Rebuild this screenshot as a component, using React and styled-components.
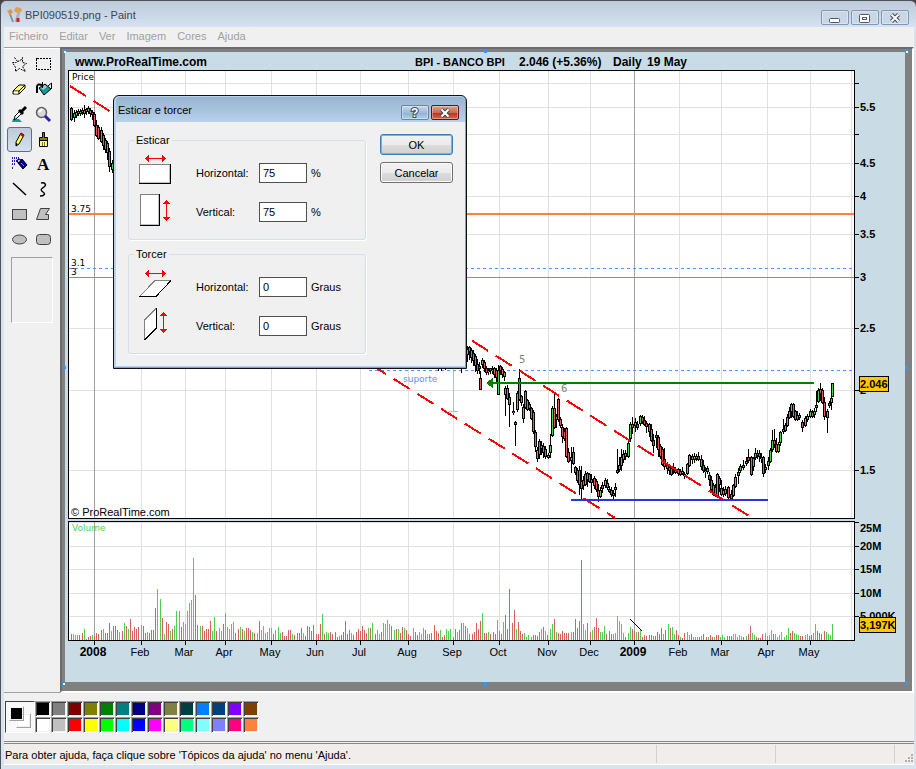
import { useState } from 'react';
import styled, { createGlobalStyle } from 'styled-components';

const MENUS = ['Ficheiro', 'Editar', 'Ver', 'Imagem', 'Cores', 'Ajuda'];

const COLORS = [
  ['#000000', '#808080', '#800000', '#808000', '#008000', '#008080', '#000080', '#800080', '#808040', '#004040', '#0080ff', '#004080', '#8000ff', '#804000'],
  ['#ffffff', '#c0c0c0', '#ff0000', '#ffff00', '#00ff00', '#00ffff', '#0000ff', '#ff00ff', '#ffff80', '#00ff80', '#80ffff', '#8080ff', '#ff0080', '#ff8040'],
];

const TOOLS = [
  {
    name: 'Selecção livre',
    icon: <path d="M6.500 5.500L3.500 1.500M6.500 5.500L9.500 4.500L11.500 1.500V6.500L15.500 7.500L11.500 10.500L14.500 15.500L8.500 12.500L4.500 15.500V11.500L1.500 6.500H5.500" fill="none" stroke="#000" strokeDasharray="2 1" />,
  },
  {
    name: 'Seleccionar',
    icon: <rect x="1.500" y="2.500" width="14" height="11" fill="none" stroke="#000" strokeDasharray="2 1" shapeRendering="crispEdges" />,
  },
  {
    name: 'Borracha',
    icon: (
      <>
        <path d="M2 10L8 4H14V7L8 13H2z" fill="#ffff80" stroke="#000" />
        <path d="M2 10H8L14 4M8 10V13" fill="none" stroke="#000" />
        <path d="M3 11.500H7" stroke="#fff" strokeWidth="2" />
      </>
    ),
  },
  {
    name: 'Preencher com cor',
    icon: (
      <>
        <path d="M4 7L10 3L16 8L9 14z" fill="#00a0a0" stroke="#000" />
        <path d="M6 7L10 4L12 6L8 9z" fill="#c0c0c0" />
        <path d="M2 12V6C2 3 4 3 7 4" fill="none" stroke="#000" strokeWidth="2" />
        <path d="M7.500 1V7M13 5L16.500 2V8" fill="none" stroke="#000" />
      </>
    ),
  },
  {
    name: 'Seleccionar cor',
    icon: (
      <>
        <path d="M1 16H11L8 13H2z" fill="#00a0a0" />
        <path d="M3 14L4 10L9 5L11 7L6 12z" fill="#fff" stroke="#000" />
        <path d="M8 4L12 8M10 6L15 1" stroke="#000" strokeWidth="3" />
      </>
    ),
  },
  {
    name: 'Lupa',
    icon: (
      <>
        <circle cx="6.500" cy="6.500" r="5" fill="#d8d8d8" stroke="#606060" strokeWidth="1.500" />
        <path d="M4 6L7 3" stroke="#fff" strokeWidth="2" />
        <path d="M10 10L15 15" stroke="#2020c0" strokeWidth="3" />
      </>
    ),
  },
  {
    name: 'Lápis',
    icon: (
      <>
        <path d="M5 15V11L10 2L13 4L8 13z" fill="#ffff60" stroke="#000" />
        <path d="M10 2L13 4L12 6L9 4z" fill="#e00000" />
        <path d="M5 15V12L7 13z" fill="#000" />
      </>
    ),
  },
  {
    name: 'Pincel',
    icon: (
      <>
        <path d="M7.500 1.500H9.500V6.500H12.500V9.500H4.500V6.500H7.500z" fill="#808000" stroke="#000" />
        <path d="M4.500 9.500H12.500V15.500H4.500z" fill="#ffff80" stroke="#000" />
        <path d="M7.500 11V15M9.500 11V15" stroke="#808000" />
      </>
    ),
  },
  {
    name: 'Spray',
    icon: (
      <>
        <path d="M1 2H8M1 5H6M1 8H4M1 12H3" stroke="#2020c0" strokeWidth="2" strokeDasharray="1 1" />
        <path d="M7 7L11 3L16 9L12 13z" fill="#0000a0" stroke="#000" />
        <path d="M6 4L9 3L10 5L7 7z" fill="#c0c0c0" stroke="#000" />
        <path d="M10 7L13 10" stroke="#8080ff" />
      </>
    ),
  },
  {
    name: 'Texto',
    icon: <text x="2" y="14" fontFamily="Liberation Serif, serif" fontWeight="bold" fontSize="17">A</text>,
  },
  {
    name: 'Linha',
    icon: <path d="M2 2L15 14" stroke="#000" strokeWidth="1.500" />,
  },
  {
    name: 'Curva',
    icon: <path d="M6 2C10 1 12 4 9 6C6 8 5 9 8 11C11 13 9 15 5 15" fill="none" stroke="#000" strokeWidth="1.500" />,
  },
  {
    name: 'Rectângulo',
    icon: <rect x="1.500" y="3.500" width="14" height="10" fill="#c0c0c0" stroke="#404040" />,
  },
  {
    name: 'Polígono',
    icon: <path d="M5.500 2.500H14.500L10.500 8.500H13.500V13.500H1.500z" fill="#c0c0c0" stroke="#404040" />,
  },
  {
    name: 'Elipse',
    icon: <ellipse cx="8.500" cy="8.500" rx="7" ry="4.500" fill="#c0c0c0" stroke="#404040" />,
  },
  {
    name: 'Rectângulo arredondado',
    icon: <rect x="1.500" y="3.500" width="14" height="10" rx="3" fill="#c0c0c0" stroke="#404040" />,
  },
];

// x, kind, high, top, bottom, low
const CANDLES = [
  [71, 'r', 107, 108, 120, 121], [74, 'g', 110, 113, 118, 122], [76, 'g', 110, 112, 116, 118], [78, 'r', 109, 111, 114, 116],
  [80, 'g', 109, 111, 114, 116], [82, 'r', 108, 110, 113, 115], [84, 'g', 105, 110, 114, 118], [86, 'r', 108, 109, 112, 115],
  [88, 'g', 106, 108, 112, 114], [90, 'r', 108, 110, 114, 117], [92, 'r', 110, 112, 115, 120], [94, 'r', 112, 114, 126, 127],
  [96, 'r', 120, 125, 136, 137], [98, 'r', 125, 127, 139, 140], [101, 'r', 127, 130, 142, 143], [103, 'r', 133, 135, 146, 150],
  [105, 'r', 138, 140, 150, 153], [107, 'r', 141, 143, 153, 160], [109, 'r', 148, 151, 167, 172], [112, 'g', 160, 163, 170, 173],
  [467, 'g', 346, 349, 355, 362], [469, 'r', 346, 347, 352, 360], [471, 'r', 348, 350, 358, 363], [473, 'r', 350, 353, 361, 366],
  [475, 'r', 354, 356, 366, 372], [477, 'r', 359, 364, 371, 374], [479, 'r', 362, 366, 369, 374], [480, 'r', 371, 378, 390, 390],
  [482, 'g', 358, 360, 365, 368], [484, 'r', 360, 362, 369, 372], [486, 'r', 366, 368, 373, 375], [488, 'g', 368, 370, 372, 375],
  [490, 'r', 368, 368, 371, 374], [492, 'g', 366, 369, 371, 374], [494, 'r', 367, 368, 375, 378], [496, 'r', 368, 370, 378, 384],
  [498, 'g', 365, 370, 395, 395], [500, 'r', 365, 366, 371, 375], [502, 'r', 367, 369, 375, 378], [504, 'g', 371, 372, 377, 381],
  [505, 'r', 386, 388, 395, 416], [507, 'r', 385, 388, 399, 400], [509, 'r', 393, 397, 405, 427], [513, 'r', 402, 411, 413, 415],
  [515, 'g', 421, 422, 425, 446], [517, 'g', 391, 393, 410, 412], [519, 'r', 369, 378, 400, 401], [521, 'r', 395, 396, 403, 406],
  [523, 'g', 404, 407, 419, 423], [525, 'r', 390, 391, 408, 409], [527, 'r', 399, 400, 410, 411], [529, 'r', 402, 404, 409, 411],
  [531, 'r', 407, 408, 419, 420], [533, 'r', 410, 412, 432, 434], [535, 'r', 430, 432, 447, 452], [537, 'g', 447, 450, 459, 462],
  [539, 'r', 439, 441, 455, 459], [541, 'r', 441, 445, 449, 455], [543, 'r', 443, 446, 453, 458], [545, 'r', 446, 449, 457, 459],
  [548, 'g', 453, 455, 458, 459], [550, 'g', 434, 445, 453, 458], [552, 'g', 406, 408, 436, 437], [554, 'r', 393, 408, 428, 429],
  [556, 'g', 414, 416, 420, 428], [558, 'r', 398, 399, 420, 422], [560, 'r', 417, 419, 426, 428], [562, 'r', 424, 427, 437, 443],
  [564, 'r', 428, 431, 439, 441], [566, 'r', 427, 428, 457, 458], [568, 'r', 448, 452, 462, 463], [571, 'g', 447, 457, 461, 473],
  [573, 'r', 447, 452, 464, 465], [575, 'r', 466, 467, 473, 475], [577, 'r', 468, 470, 481, 483], [579, 'r', 466, 470, 485, 495],
  [581, 'r', 466, 481, 489, 499], [583, 'r', 476, 480, 486, 490], [585, 'g', 471, 474, 485, 486], [587, 'r', 472, 473, 480, 487],
  [589, 'r', 473, 474, 482, 483], [591, 'r', 474, 479, 483, 493], [594, 'r', 476, 478, 486, 489], [596, 'r', 479, 481, 490, 492],
  [598, 'r', 484, 490, 497, 502], [600, 'g', 487, 490, 497, 498], [602, 'r', 482, 485, 489, 493], [605, 'g', 478, 480, 486, 488],
  [607, 'r', 479, 483, 488, 490], [609, 'r', 486, 489, 492, 493], [611, 'r', 487, 490, 495, 497], [613, 'g', 490, 493, 496, 499],
  [615, 'g', 483, 487, 490, 497], [617, 'g', 449, 470, 473, 474], [619, 'g', 457, 465, 470, 472], [621, 'g', 449, 457, 466, 471],
  [623, 'g', 450, 454, 460, 463], [625, 'r', 450, 453, 457, 460], [628, 'g', 441, 443, 457, 458], [630, 'g', 422, 424, 439, 442],
  [632, 'r', 417, 424, 428, 434], [635, 'g', 418, 422, 426, 432], [637, 'r', 421, 424, 428, 430], [640, 'g', 415, 416, 424, 426],
  [642, 'r', 415, 417, 422, 424], [644, 'r', 416, 420, 425, 426], [646, 'r', 421, 423, 427, 433], [649, 'r', 423, 424, 432, 437],
  [651, 'r', 424, 429, 441, 442], [653, 'r', 434, 440, 446, 453], [656, 'g', 431, 435, 438, 448], [658, 'r', 435, 437, 450, 457],
  [660, 'r', 444, 446, 457, 459], [662, 'r', 447, 449, 465, 466], [664, 'r', 448, 459, 467, 470], [667, 'r', 462, 465, 469, 474],
  [669, 'r', 464, 467, 471, 475], [671, 'r', 466, 468, 475, 476], [673, 'g', 463, 467, 470, 474], [675, 'r', 467, 470, 473, 474],
  [678, 'r', 468, 469, 474, 476], [680, 'r', 469, 471, 475, 476], [682, 'g', 467, 471, 474, 475], [684, 'g', 472, 474, 476, 479],
  [687, 'g', 463, 464, 474, 475], [689, 'g', 454, 455, 466, 467], [692, 'r', 454, 456, 460, 464], [694, 'g', 453, 456, 460, 463],
  [696, 'g', 454, 456, 459, 461], [698, 'r', 452, 456, 460, 461], [701, 'r', 455, 459, 467, 470], [703, 'r', 460, 465, 471, 473],
  [705, 'r', 467, 470, 472, 478], [707, 'r', 466, 468, 472, 474], [709, 'r', 472, 475, 480, 486], [711, 'r', 476, 480, 490, 491],
  [713, 'r', 483, 485, 495, 496], [715, 'r', 484, 487, 496, 497], [717, 'g', 473, 474, 497, 498], [719, 'r', 476, 478, 485, 492],
  [721, 'r', 480, 488, 495, 496], [723, 'g', 487, 490, 495, 497], [725, 'r', 486, 489, 494, 496], [728, 'r', 486, 487, 498, 499],
  [731, 'r', 490, 494, 499, 501], [733, 'g', 484, 485, 496, 497], [735, 'g', 474, 477, 487, 488], [738, 'g', 468, 472, 476, 484],
  [740, 'g', 464, 466, 471, 473], [743, 'r', 460, 465, 468, 470], [746, 'g', 457, 461, 464, 466], [748, 'r', 449, 457, 461, 463],
  [751, 'r', 456, 457, 475, 476], [753, 'g', 457, 458, 467, 471], [755, 'g', 448, 453, 458, 460], [757, 'r', 450, 453, 456, 459],
  [759, 'r', 450, 453, 457, 462], [761, 'r', 453, 457, 459, 463], [763, 'r', 456, 457, 474, 477], [765, 'r', 464, 467, 470, 473],
  [768, 'g', 457, 461, 466, 470], [770, 'g', 448, 450, 462, 463], [772, 'g', 430, 440, 450, 452], [774, 'r', 429, 440, 445, 448],
  [776, 'r', 438, 444, 452, 453], [778, 'g', 442, 444, 452, 453], [780, 'g', 431, 432, 443, 446], [783, 'g', 419, 429, 432, 434],
  [785, 'g', 423, 425, 431, 432], [787, 'g', 414, 417, 426, 427], [789, 'g', 407, 411, 418, 419], [791, 'g', 403, 404, 412, 418],
  [793, 'r', 403, 404, 417, 418], [795, 'r', 410, 411, 420, 421], [797, 'r', 411, 415, 420, 421], [799, 'g', 413, 415, 418, 420],
  [802, 'r', 420, 422, 428, 432], [805, 'g', 416, 418, 426, 427], [807, 'g', 414, 416, 420, 422], [810, 'g', 409, 411, 417, 418],
  [812, 'r', 410, 412, 417, 418], [814, 'g', 408, 411, 415, 418], [816, 'g', 391, 405, 408, 412], [818, 'g', 388, 390, 402, 403],
  [820, 'r', 383, 389, 394, 401], [822, 'r', 388, 390, 403, 404], [824, 'r', 397, 402, 417, 420], [827, 'g', 409, 411, 418, 433],
  [829, 'g', 401, 403, 406, 408], [831, 'g', 395, 398, 403, 410], [832, 'g', 383, 383, 397, 397],
];

const VOLUME = `r6 g6 g5 g5 r5 r7 g11 g1 r3 r4 g5 r4 r7 r6 r10 g11 r7 r7 r17 g9 r14 r14 r10 g8 r9 g17 r14 g11 r21 r9 r13 r11 r13 g15 r14
r7 g8 r7 r10 r10 r32 g51 g41 r22 g6 r18 r16 g9 r11 g14 g29 g29 r13 g18 g16 g29 g37 g40 g82 r45 r15 g14 r14 r9 r11 r11 r19 g9 g23 r9
g12 g9 r16 g27 g13 g11 g16 g18 r7 r11 g13 r11 g9 r12 r12 r10 g8 r7 g7 r19 g10 g14 g7 g8 g12 g12 r6 g10 g13 g7 r8 r4 r4 r10 r10 g6
r5 r7 r7 r12 g7 r4 r14 r13 r9 r15 r6 r6 r16 g26 r6 g8 g7 r8 r6 r8 r3 g4 r5 r8 r19 r6 r10 g7 r5 r8 r11 r9 r14 r10 r7 g12 r12 g17 r6
g10 g6 r8 g17 g16 g20 g16 r14 g10 r11 g11 r7 r13 g12 r10 r6 r4 g12 r8 r5 g8 g6 g12 r10 g6 r6 r7 r15 r9 r7 g10 r3 r5 g11 g9 g11 r3
r11 g8 r10 r17 g17 r14 g12 r6 r6 r8 r17 r11 r19 g27 r7 r7 g8 r6 r8 r6 g20 r9 r6 g18 r25 r11 r51 r17 r30 g11 r18 r9 r6 g7 g3 g5 g3
r5 r5 r4 r8 g11 r13 g9 r5 g11 g16 r21 g8 r7 r6 r9 r7 r7 r7 g8 r8 r21 r12 r19 r80 g16 g10 r17 r8 g10 r13 r22 r12 g8 g8 g14 r6 r9 r6
g6 g7 g24 g19 g16 g7 r3 g7 g13 r11 r9 g8 r8 g10 r3 r5 r4 r5 r5 g4 r4 r8 r6 r12 g6 r10 g16 r12 g13 g6 r10 r5 g3 r2 r7 g8 g5 r6 g3 g3
g3 r3 g4 r6 r3 g3 r5 r3 g3 r5 r5 g3 g5 g3 r4 r4 r4 g6 g6 g3 g5 g4 r3 g4 r6 r14 g7 g5 r3 r2 r2 r6 g7 g4 g5 g10 r6 g6 g3 g5 g8 g3 g5
g12 r7 r9 g7 g6 g5 r4 r4 g5 g6 r4 r5 g7 g16 r9 r7 r6 r9 g8 g6 g5 g16`.split(/\s+/);

const MONTHS = [
  [94, '2008', true], [141, 'Feb'], [185, 'Mar'], [225, 'Apr'], [271, 'May'], [316, 'Jun'], [360, 'Jul'], [408, 'Aug'],
  [453, 'Sep'], [499, 'Oct'], [548, 'Nov'], [590, 'Dec'], [634, '2009', true], [679, 'Feb'], [721, 'Mar'], [767, 'Apr'], [810, 'May'],
];

const PRICES = [[83], [107, '5.5'], [134], [163, '4.5'], [196, '4'], [234, '3.5'], [277, '3'], [328, '2.5'], [390, '2'], [470, '1.5']];
const VOLUMES = [[522, '25M', 532], [546, '20M', 550], [569, '15M', 573], [593, '10M', 597], [616, '5,000K', 620]];
// the last value marks the hollow handles
const HANDLES = [[63, 50, true], [484, 50], [905, 50, true], [63, 366], [905, 366], [62, 682, true], [484, 682], [905, 682]];
const FILL = { r: '#d86060', g: '#50d050' };

function Chart() {
  const step = (832 - 71) / (VOLUME.length - 1);
  return (
    <ChartSvg viewBox="65 52 840 630" role="img" aria-label="BPI - BANCO BPI">
      <rect x="65" y="52" width="840" height="630" fill="#c9dce6" />
      <rect x="68.500" y="70.500" width="786" height="448" fill="#fff" stroke="#000" />
      <rect x="68.500" y="521.500" width="786" height="119" fill="#fff" stroke="#000" />
      <g fill="#e0e0e0">
        {PRICES.map(([y]) => <rect key={y} x="69" y={y} width="785" height="1" />)}
        {VOLUMES.map(([y]) => <rect key={y} x="69" y={y} width="785" height="1" />)}
        {[...MONTHS, [851, '']].map(([x, label, year]) => (
          <g key={x} fill={year ? '#a0a0a0' : '#e0e0e0'}>
            <rect x={x} y="71" width="1" height="447" />
            <rect x={x} y="522" width="1" height="118" />
          </g>
        ))}
      </g>
      <g fill="#000">
        {PRICES.map(([y]) => <rect key={y} x="855" y={y} width="4" height="1" />)}
        {VOLUMES.map(([y]) => <rect key={y} x="855" y={y} width="4" height="1" />)}
        {MONTHS.map(([x]) => <rect key={x} x={x} y="641" width="1" height="4" />)}
      </g>
      <rect x="69" y="213" width="785" height="2" fill="#ff8040" />
      <rect x="69" y="277" width="785" height="1" fill="#6090f8" />
      <path d="M69 268.500H854M369 370.500H852" stroke="#6090f8" strokeDasharray="3 3" />
      <path d="M453.500 371V411M449 411.500H458" stroke="#a8bcf8" />
      <g>
        {VOLUME.map((item, i) => {
          const height = Number(item.slice(1));
          return <rect key={i} x={Math.round(71 + i * step)} y={640 - height} width="1" height={height} fill={FILL[item[0]]} />;
        })}
      </g>
      <g>
        {CANDLES.map(([x, kind, high, top, bottom, low]) => (
          <g key={x}>
            <rect x={x} y={high} width="1" height={low - high} />
            <rect x={x - 1} y={top} width="3" height={bottom - top} />
          </g>
        ))}
        {CANDLES.map(([x, kind, high, top, bottom]) => (
          <rect key={x} x={x} y={top + 1} width="1" height={Math.max(bottom - top - 2, 1)} fill={FILL[kind]} />
        ))}
      </g>
      <path d="M438.500 369V371M441.500 369V371M445.500 369V370M461.500 369V373" stroke="#000" />
      <path d="M70 86L749 516" stroke="#f00" strokeWidth="2" strokeDasharray="19 9" />
      <path d="M370 364L615 518" stroke="#f00" strokeWidth="2" strokeDasharray="19 9" />
      <rect x="490" y="382" width="324" height="2" fill="#008000" />
      <path d="M486 383L493 378V388z" fill="#008000" />
      <rect x="571" y="499" width="197" height="2" fill="#3030e0" />
      <path d="M630 619L642 631" stroke="#000" />
      <ChartText x="75" y="66" $size={12} $bold>www.ProRealTime.com</ChartText>
      <ChartText x="415" y="66" $bold>BPI - BANCO BPI</ChartText>
      <ChartText x="519" y="66" $size={12} $bold>2.046 (+5.36%)</ChartText>
      <ChartText x="613" y="66" $size={12} $bold>Daily</ChartText>
      <ChartText x="647" y="66" $size={12} $bold>19 May</ChartText>
      <ChartText x="71" y="516">© ProRealTime.com</ChartText>
      <ChartText x="72" y="80" $wide>Price</ChartText>
      <ChartText x="71" y="212" $wide>3.75</ChartText>
      <ChartText x="71" y="266" $wide>3.1</ChartText>
      <ChartText x="71" y="275" $wide>3</ChartText>
      <ChartText x="72" y="531" $wide fill="#50d050">Volume</ChartText>
      <ChartText x="403" y="382" $wide fill="#6090f8">suporte</ChartText>
      <ChartText x="519" y="363" $wide $size={10} fill="#808080">5</ChartText>
      <ChartText x="561" y="392" $wide $size={10} fill="#808080">6</ChartText>
      {MONTHS.map(([x, label, year]) => (
        <ChartText key={x} x={x - 1} y="656" textAnchor="middle" $bold={year} $size={year ? 12 : 11}>{label}</ChartText>
      ))}
      {PRICES.map(([y, label]) => <ChartText key={y} x="860" y={y + 4} $bold>{label}</ChartText>)}
      {VOLUMES.map(([y, label, base]) => <ChartText key={y} x="860" y={base} $bold>{label}</ChartText>)}
      <rect x="859.500" y="376.500" width="29" height="15" fill="#ffc800" stroke="#000" />
      <ChartText x="860" y="388" $bold>2.046</ChartText>
      <rect x="859.500" y="617.500" width="36" height="15" fill="#ffc800" stroke="#000" />
      <ChartText x="860" y="629" $bold>3,197K</ChartText>
      {HANDLES.map(([x, y, hollow]) => (
        <g key={`${x}-${y}`}>
          <rect x={x} y={y} width="3" height="3" fill="#3399ff" />
          {hollow && <rect x={x + 1} y={y + 1} width="2" height="2" fill="#fff" />}
        </g>
      ))}
    </ChartSvg>
  );
}

const ICONS = {
  stretchX: (
    <>
      <Arrow x={16} y={5} />
      <rect x="0" y="11" width="32" height="20" fill="#000" />
      <rect x="0" y="11" width="31" height="19" fill="#808080" />
      <rect x="1" y="12" width="30" height="18" fill="#c0c0c0" />
      <rect x="1" y="12" width="29" height="17" fill="#fff" />
    </>
  ),
  stretchY: (
    <>
      <Arrow x={27} y={18} vertical />
      <rect x="1" y="2" width="20" height="32" fill="#000" />
      <rect x="1" y="2" width="19" height="31" fill="#808080" />
      <rect x="2" y="3" width="18" height="30" fill="#c0c0c0" />
      <rect x="2" y="3" width="17" height="29" fill="#fff" />
    </>
  ),
  skewX: (
    <>
      <Arrow x={16} y={6} />
      <path d="M1 29L16 13.500H32L17 29.500z" fill="#fff" />
      <path d="M1 29L16 13.500H32" fill="none" stroke="#808080" />
      <path d="M32 13.500L17 29.500H0" fill="none" stroke="#000" />
    </>
  ),
  skewY: (
    <>
      <Arrow x={24} y={16} vertical />
      <path d="M5.500 34V14L17.500 2V22z" fill="#fff" />
      <path d="M5.500 34V14L17.500 2" fill="none" stroke="#808080" />
      <path d="M17.500 2V22L5.500 34" fill="none" stroke="#000" />
    </>
  ),
};

function Arrow({ x, y, vertical }) {
  return (
    <path
      transform={`translate(${x} ${y}) rotate(${vertical ? 90 : 0} 0.5 0.5)`}
      d="M-10 0.5L-6 -3V0H7V-3L11 0.5L7 4V1H-6V4z"
      fill="#f00"
    />
  );
}

function Field({ id, icon, label, unit, initial }) {
  const [value, setValue] = useState(initial);
  return (
    <FieldRow>
      <svg width="34" height="39" shapeRendering="crispEdges" aria-hidden="true">{ICONS[icon]}</svg>
      <label htmlFor={id}>{label}</label>
      <NumberInput id={id} value={value} onChange={(e) => setValue(e.target.value)} />
      <Unit>{unit}</Unit>
    </FieldRow>
  );
}

function StretchDialog() {
  return (
    <Dialog role="dialog" aria-labelledby="dialog-title">
      <DialogTitleBar>
        <DialogTitle id="dialog-title">Esticar e torcer</DialogTitle>
        <CaptionButton $variant="help" aria-label="Contexto">
          <svg width="12" height="13"><text x="2" y="11" fontSize="12" fontWeight="bold" fontFamily="Liberation Sans, sans-serif" fill="#fff" stroke="#404858" strokeWidth="2" paintOrder="stroke">?</text></svg>
        </CaptionButton>
        <CaptionButton $variant="close" aria-label="Fechar">
          <CloseGlyph />
        </CaptionButton>
      </DialogTitleBar>
      <DialogBody>
        <Groups>
          <Group>
            <legend>Esticar</legend>
            <Field id="stretch-x" icon="stretchX" label="Horizontal:" unit="%" initial="75" />
            <Field id="stretch-y" icon="stretchY" label="Vertical:" unit="%" initial="75" />
          </Group>
          <Group>
            <legend>Torcer</legend>
            <Field id="skew-x" icon="skewX" label="Horizontal:" unit="Graus" initial="0" />
            <Field id="skew-y" icon="skewY" label="Vertical:" unit="Graus" initial="0" />
          </Group>
        </Groups>
        <Actions>
          <DialogButton $primary>OK</DialogButton>
          <DialogButton>Cancelar</DialogButton>
        </Actions>
      </DialogBody>
    </Dialog>
  );
}

function CloseGlyph() {
  return (
    <svg width="14" height="10" aria-hidden="true">
      <path d="M3.500 1.500L10.500 8.500M10.500 1.500L3.500 8.500" stroke="#404858" strokeWidth="4" />
      <path d="M3.500 1.500L10.500 8.500M10.500 1.500L3.500 8.500" stroke="#fff" strokeWidth="2" />
    </svg>
  );
}

export default function App() {
  const [tool, setTool] = useState('Lápis');
  return (
    <>
      <GlobalStyle />
      <PaintWindow>
        <TitleBar>
          <svg width="16" height="16" aria-hidden="true">
            <path d="M3 7L6 15" stroke="#8b8f98" strokeWidth="2" />
            <path d="M12 5L9 15" stroke="#a8b4c0" strokeWidth="3" />
            <path d="M11 11L11 15" stroke="#d02020" strokeWidth="3" />
            <path d="M0 4L4 2L6 5L3 8z" fill="#d89848" />
            <path d="M7 3L9 0L14 1L15 4L11 6L8 5z" fill="#e0a050" />
          </svg>
          <Title>BPI090519.png - Paint</Title>
          <CaptionButton aria-label="Minimizar">
            <svg width="14" height="10"><rect x="1.500" y="5.500" width="10" height="4" rx="1" fill="#fff" stroke="#505868" /></svg>
          </CaptionButton>
          <CaptionButton aria-label="Maximizar">
            <svg width="14" height="10">
              <rect x="1.500" y="1.500" width="10" height="8" rx="1" fill="#fff" stroke="#505868" />
              <rect x="4.500" y="4.500" width="4" height="2" fill="#fff" stroke="#505868" />
            </svg>
          </CaptionButton>
          <CaptionButton aria-label="Fechar">
            <CloseGlyph />
          </CaptionButton>
        </TitleBar>
        <MenuBar>
          {MENUS.map((menu) => <MenuItem key={menu}>{menu}</MenuItem>)}
        </MenuBar>
        <Main>
          <ToolBox>
            <ToolGrid>
              {TOOLS.map(({ name, icon }) => (
                <ToolButton key={name} aria-label={name} $active={tool === name} onClick={() => setTool(name)}>
                  <svg width="17" height="17" overflow="visible" aria-hidden="true">{icon}</svg>
                </ToolButton>
              ))}
            </ToolGrid>
            <ToolOptions />
          </ToolBox>
          <Workspace>
            <Chart />
          </Workspace>
        </Main>
        <ColorBox>
          <CurrentColors>
            <Chip $color="#fff" $back />
            <Chip $color="#000" />
          </CurrentColors>
          <Palette>
            {COLORS.flat().map((color) => <Swatch key={color} $color={color} aria-label={color} />)}
          </Palette>
        </ColorBox>
        <StatusBar>
          <StatusText>Para obter ajuda, faça clique sobre 'Tópicos da ajuda' no menu 'Ajuda'.</StatusText>
          <StatusCell />
          <StatusCell />
          <StatusGrip>
            <svg width="10" height="10" fill="#b0b0b0" shapeRendering="crispEdges" aria-hidden="true">
              <path d="M7 1h2v2h-2zM4 4h2v2h-2zM7 4h2v2h-2zM1 7h2v2h-2zM4 7h2v2h-2zM7 7h2v2h-2z" />
            </svg>
          </StatusGrip>
        </StatusBar>
        <StretchDialog />
      </PaintWindow>
    </>
  );
}

const GlobalStyle = createGlobalStyle`
  * {
    box-sizing: border-box;
  }

  body {
    margin: 0;
    background: #444;
    color: #000;
    font: 11px/14px 'Liberation Sans', Arial, sans-serif;
  }

  button,
  input {
    margin: 0;
    padding: 0;
    color: inherit;
    font: inherit;
  }

  svg {
    display: block;
    flex: none;
  }
`;

const PaintWindow = styled.div`
  position: relative;
  display: flex;
  flex-direction: column;
  min-height: 100vh;
  padding: 0 2px 4px 3px;
  border: 1px solid #505258;
  border-right: 0;
  border-radius: 6px 6px 0 0;
  background: linear-gradient(#bccada, #d6e3f1 27px, #d6e3f1);
  overflow: hidden;
`;

const TitleBar = styled.header`
  display: flex;
  align-items: flex-start;
  gap: 2px;
  height: 26px;
  padding: 6px 5px 0 3px;

  & > button {
    margin-top: 3px;
  }
`;

const Title = styled.h1`
  flex: 1;
  margin: 1px 0 0;
  color: #3c4654;
  font-size: 11px;
  font-weight: normal;
`;

const CaptionButton = styled.button`
  display: flex;
  align-items: center;
  justify-content: center;
  width: 28px;
  height: 15px;
  border: 1px solid ${({ $variant }) => ($variant === 'close' ? '#501828' : $variant === 'help' ? '#6c84a4' : '#8494b4')};
  border-radius: 2px;
  background: ${({ $variant }) =>
    $variant === 'close'
      ? 'linear-gradient(#e0a090, #cc6858 50%, #b83018 51%, #d06850)'
      : $variant === 'help'
        ? 'linear-gradient(#c4d8ec, #a0bcd8 50%, #90b0d0 51%, #b0d0e8)'
        : '#c9d6e5'};
  box-shadow: inset 0 0 0 1px rgba(255, 255, 255, 0.35);
`;

const MenuBar = styled.nav`
  display: flex;
  gap: 1px;
  height: 20px;
  background: #f0f0f0;
`;

const MenuItem = styled.button`
  padding: 0 5px 2px;
  border: 0;
  background: none;
  color: #a0a0a0;
`;

const Main = styled.main`
  display: flex;
  flex: 1;
  min-height: 0;
  background: #f0f0f0;
`;

const ToolBox = styled.aside`
  flex: none;
  width: 56px;
  padding: 4px 3px 0;
  border-top: 1px solid #a0a0a0;
  border-bottom: 1px solid #a0a0a0;
  box-shadow: inset 0 1px #fff;
`;

const ToolGrid = styled.div`
  display: grid;
  grid-template-columns: 25px 23px;
  grid-auto-rows: 25px;
`;

const ToolButton = styled.button`
  display: flex;
  align-items: center;
  justify-content: center;
  border: 1px solid ${({ $active }) => ($active ? '#607080' : 'transparent')};
  border-radius: 3px;
  background: ${({ $active }) => ($active ? 'linear-gradient(#bccada, #d4e0ec)' : 'none')};
`;

const ToolOptions = styled.div`
  width: 42px;
  height: 66px;
  margin: 5px 4px;
  border: 1px solid #fff;
  border-top-color: #a0a0a0;
  border-left-color: #a0a0a0;
`;

const Workspace = styled.section`
  flex: 1;
  min-width: 0;
  padding: 3px 0 9px 3px;
  border: 2px solid #fff;
  border-top-color: #6c6c6c;
  border-left-color: #6c6c6c;
  background: #808080;
  overflow: hidden;
`;

const ChartSvg = styled.svg`
  width: 840px;
  height: 630px;
  overflow: visible;
  shape-rendering: crispEdges;
`;

const ChartText = styled.text`
  font-family: ${({ $wide }) => ($wide ? "'DejaVu Sans', sans-serif" : "'Liberation Sans', sans-serif")};
  font-size: ${({ $size, $wide }) => $size || ($wide ? 9 : 11)}px;
  font-weight: ${({ $bold }) => ($bold ? 'bold' : 'normal')};
`;

const ColorBox = styled.section`
  display: flex;
  height: 48px;
  padding: 8px 1px;
  background: #f0f0f0;
`;

const CurrentColors = styled.div`
  position: relative;
  width: 30px;
  height: 32px;
  border: 1px solid #fff;
  border-top-color: #404040;
  border-left-color: #404040;
  background: #f8f8f8;
`;

const Chip = styled.span`
  position: absolute;
  top: ${({ $back }) => ($back ? 11 : 4)}px;
  left: ${({ $back }) => ($back ? 10 : 3)}px;
  width: 15px;
  height: 15px;
  border: 1px solid #a0a0a0;
  border-top-color: #fff;
  border-left-color: #fff;
  background: ${({ $color }) => $color};
  box-shadow: inset 0 0 0 1px #f0f0f0;
`;

const Palette = styled.div`
  display: grid;
  grid-template-columns: repeat(14, 16px);
  grid-auto-rows: 16px;
`;

const Swatch = styled.button`
  border: 1px solid #fff;
  border-top-color: #a0a0a0;
  border-left-color: #a0a0a0;
  background: ${({ $color }) => $color};
  box-shadow: inset 1px 1px #404040, inset -1px -1px #f0f0f0;
`;

const StatusBar = styled.footer`
  display: flex;
  height: 24px;
  padding: 1px 0;
  border-top: 3px double #888;
  border-bottom: 1px solid #fff;
  background: #f0edeb;
`;

const StatusText = styled.p`
  flex: 1;
  margin: 0;
  padding: 3px 1px;
`;

const StatusCell = styled.div`
  width: 119px;
  border-left: 1px solid #d4d0ce;
`;

const StatusGrip = styled.div`
  display: flex;
  align-items: flex-end;
  justify-content: flex-end;
  width: 20px;
  border-left: 1px solid #d4d0ce;
`;

const Dialog = styled.section`
  position: absolute;
  top: 94px;
  left: 112px;
  padding: 1px 1px 2px 2px;
  border: 1px solid #101010;
  border-radius: 6px 6px 0 0;
  background: #b9d1ea;
  box-shadow: inset -1px -1px #34c0e8;
`;

const DialogTitleBar = styled.header`
  display: flex;
  align-items: flex-start;
  gap: 2px;
  height: 25px;
  padding: 8px 6px 0 2px;
  border-radius: 4px 4px 0 0;
  background: linear-gradient(#98b4d2, #b9d1ea);
`;

const DialogTitle = styled.h2`
  flex: 1;
  margin: -2px 0 0;
  font-size: 11px;
  font-weight: normal;
`;

const DialogBody = styled.div`
  display: flex;
  gap: 14px;
  padding: 11px 12px 12px;
  background: #f0f0f0;
`;

const Groups = styled.div`
  display: grid;
  gap: 7px;
  width: 238px;
`;

const Group = styled.fieldset`
  margin: 0;
  padding: 6px 10px 8px;
  border: 1px solid #d5dfe5;
  border-radius: 3px;
  box-shadow: 1px 1px #fff;

  legend {
    margin-left: -5px;
    padding: 0 2px;
  }
`;

const FieldRow = styled.div`
  display: grid;
  grid-template-columns: 57px 63px 48px auto;
  align-items: center;
  height: 39px;
`;

const NumberInput = styled.input`
  width: 48px;
  height: 20px;
  padding: 0 3px;
  border: 1px solid #505050;
  background: #fff;
`;

const Unit = styled.span`
  padding-left: 4px;
`;

const Actions = styled.div`
  display: flex;
  flex-direction: column;
  gap: 7px;
  padding-top: 1px;
`;

const DialogButton = styled.button`
  width: 73px;
  height: 21px;
  border: 1px solid ${({ $primary }) => ($primary ? '#3c7fb1' : '#707070')};
  border-radius: 3px;
  background: linear-gradient(#f2f2f2, #ebebeb 50%, #dddddd 51%, #cfcfcf);
  box-shadow: inset 0 0 0 1px ${({ $primary }) => ($primary ? '#48c8f0' : '#fcfcfc')};
`;
